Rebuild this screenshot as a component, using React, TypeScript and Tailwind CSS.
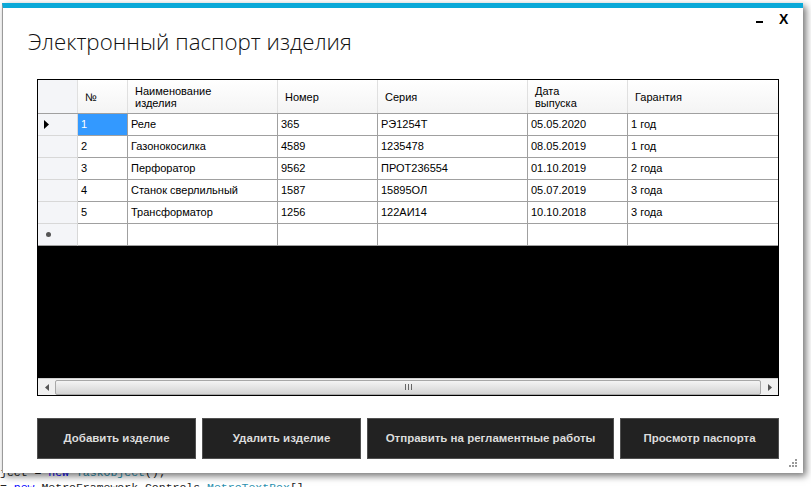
import React from "react";

interface Item {
    num: string;
    name: string;
    number: string;
    series: string;
    date: string;
    warranty: string;
}

const items: Item[] = [
    { num: "1", name: "Реле", number: "365", series: "РЭ1254Т", date: "05.05.2020", warranty: "1 год" },
    { num: "2", name: "Газонокосилка", number: "4589", series: "1235478", date: "08.05.2019", warranty: "1 год" },
    { num: "3", name: "Перфоратор", number: "9562", series: "ПРОТ236554", date: "01.10.2019", warranty: "2 года" },
    { num: "4", name: "Станок сверлильный", number: "1587", series: "15895ОЛ", date: "05.07.2019", warranty: "3 года" },
    { num: "5", name: "Трансформатор", number: "1256", series: "122АИ14", date: "10.10.2018", warranty: "3 года" },
];

const cols = "grid grid-cols-[40px_50px_150px_100px_150px_100px_150px]";
const cell = "h-[22px] border-r border-b border-[#a0a0a0] pl-[3px] flex items-center overflow-hidden whitespace-nowrap";
const rowHead = "h-[22px] border-r border-b border-[#d8d8d8] bg-[#f4f5f8] flex items-center";

const buttons = [
    { label: "Добавить изделие", w: "w-[159px]" },
    { label: "Удалить изделие", w: "w-[159px]" },
    { label: "Отправить на регламентные работы", w: "w-[247px]" },
    { label: "Просмотр паспорта", w: "w-[159px]" },
];

const App: React.FC = () => {
    return (
        <div className="relative w-[811px] h-[487px] bg-white overflow-hidden">
            {/* code editor peeking out behind the form */}
            <div className="absolute left-0 top-[465px] font-['Liberation_Mono',monospace] text-[11.5px] leading-[15px] text-[#222] whitespace-nowrap">
                <div>
                    ject = <span className="text-[#0000ff]">new</span> <span className="text-[#2b91af]">TaskObject</span>();
                </div>
                <div>
                    = <span className="text-[#0000ff]">new</span> MetroFramework.Controls.<span className="text-[#2b91af]">MetroTextBox</span>[]
                </div>
            </div>

            {/* form window */}
            <div className="absolute left-[2px] top-[3px] w-[801px] h-[470px] bg-white border-t-[5px] border-l border-t-[#0aa9d8] border-l-[#9a9a9a] shadow-[3px_3px_7px_rgba(0,0,0,0.55)] font-['Liberation_Sans',sans-serif]">
                <div className="absolute left-[753px] top-[13px] w-[7px] h-[2px] bg-black" />
                <div className="absolute left-[776px] top-[3px] text-[14px] font-bold leading-[16px] text-black">X</div>

                <div className="pl-[25px] pt-[18px] h-[71px]">
                    <div className="font-['Open_Sans',sans-serif] font-light text-[22.3px] leading-[32px] text-[#111]">
                        Электронный паспорт изделия
                    </div>
                </div>

                <div className="ml-[34px] w-[742px] border border-black text-[11px] text-black">
                    {/* header */}
                    <div className={`${cols} h-[34px] bg-gradient-to-b from-white to-[#f4f4f4] border-b border-[#a0a0a0]`}>
                        <div className="border-r border-[#e0e0e0] bg-[#f4f5f8]" />
                        <div className="border-r border-[#e0e0e0] pl-[7px] flex items-center pt-[2px]">№</div>
                        <div className="border-r border-[#e0e0e0] pl-[7px] flex items-center leading-[12px] pt-[1px]">
                            Наименование
                            <br />
                            изделия
                        </div>
                        <div className="border-r border-[#e0e0e0] pl-[7px] flex items-center pt-[2px]">Номер</div>
                        <div className="border-r border-[#e0e0e0] pl-[7px] flex items-center pt-[2px]">Серия</div>
                        <div className="border-r border-[#e0e0e0] pl-[7px] flex items-center leading-[12px] pt-[1px]">
                            Дата
                            <br />
                            выпуска
                        </div>
                        <div className="pl-[7px] flex items-center pt-[2px]">Гарантия</div>
                    </div>

                    {items.map((item, i) => (
                        <div key={i} className={cols}>
                            <div className={rowHead}>
                                {i === 0 && (
                                    <svg width="5" height="9" viewBox="0 0 5 9" className="ml-[6px]">
                                        <path d="M0 0 L5 4.5 L0 9 Z" fill="#000" />
                                    </svg>
                                )}
                            </div>
                            <div className={`${cell} ${i === 0 ? "bg-[#3399ff] text-white" : ""}`}>{item.num}</div>
                            <div className={cell}>{item.name}</div>
                            <div className={cell}>{item.number}</div>
                            <div className={cell}>{item.series}</div>
                            <div className={cell}>{item.date}</div>
                            <div className={`${cell} border-r-0`}>{item.warranty}</div>
                        </div>
                    ))}
                    <div className={cols}>
                        <div className={`${rowHead} border-b-[#a0a0a0]`}>
                            <span className="ml-[8px] w-[5px] h-[5px] rounded-full bg-[#555]" />
                        </div>
                        <div className={cell} />
                        <div className={cell} />
                        <div className={cell} />
                        <div className={cell} />
                        <div className={cell} />
                        <div className={`${cell} border-r-0`} />
                    </div>

                    <div className="h-[132px] bg-black" />

                    {/* horizontal scrollbar */}
                    <div className="h-[17px] bg-[#f0f0f0] border-t border-[#d0d0d0] flex items-center">
                        <div className="w-[17px] flex justify-center">
                            <svg width="4" height="7" viewBox="0 0 4 7">
                                <path d="M4 0 L0 3.5 L4 7 Z" fill="#555" />
                            </svg>
                        </div>
                        <div className="flex-1 h-[15px] rounded-[2px] border border-[#a8a8a8] bg-gradient-to-b from-[#f4f4f4] to-[#d4d4d4] flex items-center justify-center">
                            <div className="flex gap-[2px]">
                                <span className="w-px h-[6px] bg-[#666]" />
                                <span className="w-px h-[6px] bg-[#666]" />
                                <span className="w-px h-[6px] bg-[#666]" />
                            </div>
                        </div>
                        <div className="w-[17px] flex justify-center">
                            <svg width="4" height="7" viewBox="0 0 4 7">
                                <path d="M0 0 L4 3.5 L0 7 Z" fill="#555" />
                            </svg>
                        </div>
                    </div>
                </div>

                <div className="ml-[34px] mt-[22px] flex gap-[6px]">
                    {buttons.map((b) => (
                        <button
                            key={b.label}
                            className={`${b.w} h-[41px] bg-[#222222] border border-[#505050] text-[#dcdcdc] font-['Liberation_Sans',sans-serif] font-bold text-[11.5px] flex items-center justify-center`}
                        >
                            {b.label}
                        </button>
                    ))}
                </div>

                {/* resize grip */}
                <div className="absolute right-[6px] bottom-[6px] grid grid-cols-3 gap-[1px] w-[8px]">
                    <span />
                    <span />
                    <span className="w-[2px] h-[2px] bg-[#999]" />
                    <span />
                    <span className="w-[2px] h-[2px] bg-[#999]" />
                    <span className="w-[2px] h-[2px] bg-[#999]" />
                    <span className="w-[2px] h-[2px] bg-[#999]" />
                    <span className="w-[2px] h-[2px] bg-[#999]" />
                    <span className="w-[2px] h-[2px] bg-[#999]" />
                </div>
            </div>
        </div>
    );
};

export default App;
